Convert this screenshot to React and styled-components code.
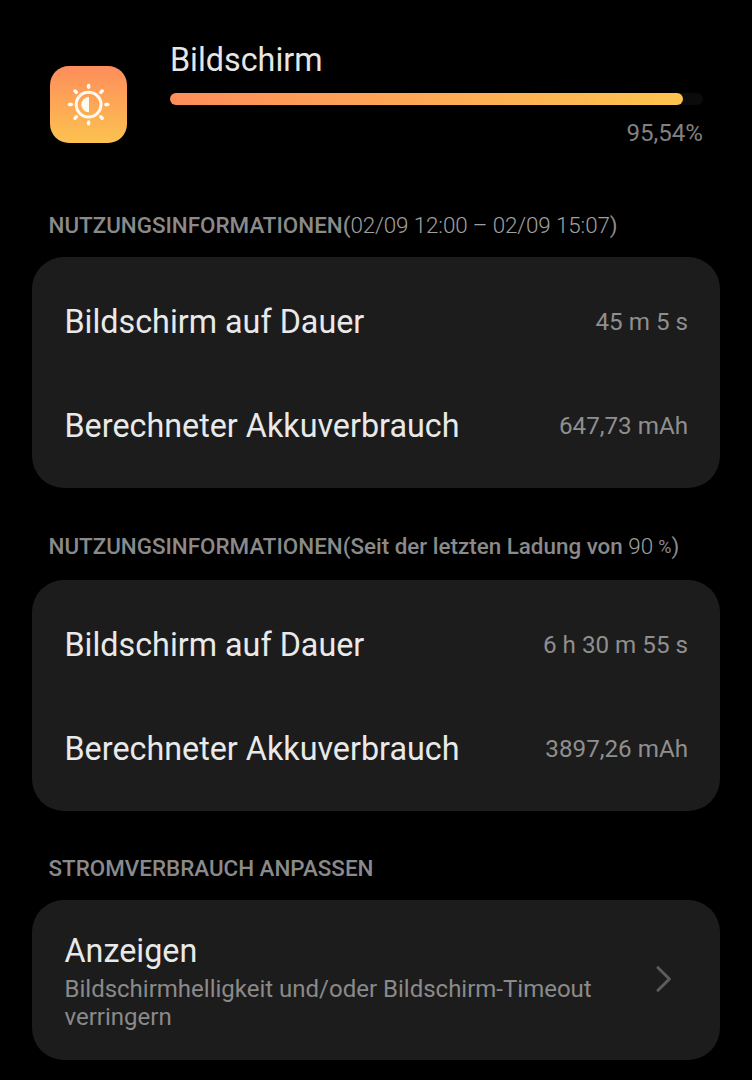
import React from "react";
import styled, { createGlobalStyle } from "styled-components";

const GlobalStyle = createGlobalStyle`
  * {
    box-sizing: border-box;
  }

  body {
    margin: 0;
    background: #000;
    font-family: Roboto, "Noto Sans", sans-serif;
  }
`;

const Screen = styled.main`
  width: 752px;
  height: 1080px;
  padding: 0 32px;
  overflow: hidden;
  background: #000;
`;

const Header = styled.header`
  display: flex;
  height: 202px;
  padding: 39px 17px 0 18px;
`;

const AppIcon = styled.div`
  flex: none;
  width: 77px;
  height: 77px;
  margin: 27px 43px 0 0;
  border-radius: 19px;
  background: linear-gradient(#fe8d5c, #fcc24f);

  svg {
    display: block;
  }
`;

const Usage = styled.div`
  flex: 1;
`;

const Title = styled.h1`
  margin: 0;
  padding-top: 1px;
  color: #e6e6e6;
  font-size: 32.3px;
  font-weight: 400;
  line-height: 40px;
`;

const Track = styled.div`
  height: 12px;
  margin-top: 13.4px;
  border-radius: 6px;
  background: #0b0b0b;
`;

const Fill = styled.div`
  height: 100%;
  border-radius: 6px;
  background: linear-gradient(90deg, #fe8d5a, #fdc44f);
`;

const Percent = styled.div`
  margin-top: 14px;
  color: #808080;
  font-size: 24.1px;
  line-height: 28px;
  text-align: right;
`;

const SectionTitle = styled.h2`
  height: 55px;
  margin: 0;
  padding: ${(props) => props.$top || "9px"} 16px 0 16.5px;
  color: #8a8a8a;
  font-size: 22.4px;
  font-weight: 500;
  line-height: 28px;
  white-space: nowrap;
`;

const Light = styled.span`
  color: #a0a0a0;
  font-weight: 300;
  letter-spacing: -0.12px;
`;

const Regular = styled.span`
  font-weight: 400;
`;

const SmallPercent = styled(Regular)`
  font-size: 18px;
  line-height: 1;
  vertical-align: 1px;
`;

const Card = styled.section`
  height: ${(props) => props.$height || "231px"};
  margin-bottom: ${(props) => props.$gap || "0"};
  padding: ${(props) => props.$padding || "13px 32px 0 32.5px"};
  border-radius: 32px;
  background: #1c1c1c;
`;

const Row = styled.div`
  display: flex;
  align-items: center;
  justify-content: space-between;
  height: 104px;
`;

const Label = styled.span`
  color: #e9e9e9;
  font-size: 32.3px;
  line-height: 38px;
`;

const Value = styled.span`
  color: #8f8f8f;
  font-size: 24.2px;
  line-height: 28px;
`;

const LinkRow = styled.div`
  display: flex;
  align-items: center;
  justify-content: space-between;
`;

const Hint = styled.p`
  width: 560px;
  margin: 4.6px 0 0;
  color: #8a8a8a;
  font-size: 24px;
  line-height: 28.5px;
`;

const Chevron = styled.svg`
  flex: none;
  margin: 0 14px 5px 0;
`;

const rayAngles = [0, 45, 90, 135, 180, 225, 270, 315];

const BrightnessIcon = () => (
  <svg width="77" height="77" viewBox="0 0 77 77" fill="none">
    <circle cx="38.6" cy="38.6" r="12.4" stroke="#fffaf0" strokeWidth="3" />
    <path d="M39 30.9v15.4a7.7 7.7 0 0 1 0-15.4z" fill="#fffaf0" />
    {rayAngles.map((angle) => (
      <path
        key={angle}
        d="M38.6 19.4v1.9"
        stroke="#fffaf0"
        strokeWidth="3.5"
        strokeLinecap="round"
        transform={`rotate(${angle} 38.6 38.6)`}
      />
    ))}
  </svg>
);

const UsageCard = ({ duration, consumption, gap }) => (
  <Card $gap={gap}>
    <Row>
      <Label>Bildschirm auf Dauer</Label>
      <Value>{duration}</Value>
    </Row>
    <Row>
      <Label>Berechneter Akkuverbrauch</Label>
      <Value>{consumption}</Value>
    </Row>
  </Card>
);

const App = () => {
  const percent = 95.54;

  return (
    <Screen>
      <GlobalStyle />
      <Header>
        <AppIcon>
          <BrightnessIcon />
        </AppIcon>
        <Usage>
          <Title>Bildschirm</Title>
          <Track>
            <Fill style={{ width: `${percent + 0.7}%` }} />
          </Track>
          <Percent>{percent.toString().replace(".", ",")}%</Percent>
        </Usage>
      </Header>

      <SectionTitle>
        NUTZUNGSINFORMATIONEN(
        <Light>02/09 12:00 – 02/09 15:07</Light>
        <Regular>)</Regular>
      </SectionTitle>
      <UsageCard duration="45 m 5 s" consumption="647,73 mAh" gap="37px" />

      <SectionTitle $top="7px">
        NUTZUNGSINFORMATIONEN(Seit der letzten Ladung von <Light>90 </Light>
        <SmallPercent>%</SmallPercent>
        <Regular>)</Regular>
      </SectionTitle>
      <UsageCard duration="6 h 30 m 55 s" consumption="3897,26 mAh" gap="34px" />

      <SectionTitle>STROMVERBRAUCH ANPASSEN</SectionTitle>
      <Card $height="160px" $padding="32px 32px 0 32.5px">
        <LinkRow>
          <div>
            <Label as="div">Anzeigen</Label>
            <Hint>Bildschirmhelligkeit und/oder Bildschirm-Timeout verringern</Hint>
          </div>
          <Chevron width="20" height="30" viewBox="0 0 20 30" fill="none">
            <path
              d="M4 3.7l11.4 11.3L4 26.3"
              stroke="#5c5c5c"
              strokeWidth="3"
              strokeLinecap="round"
              strokeLinejoin="round"
            />
          </Chevron>
        </LinkRow>
      </Card>
    </Screen>
  );
};

export default App;
